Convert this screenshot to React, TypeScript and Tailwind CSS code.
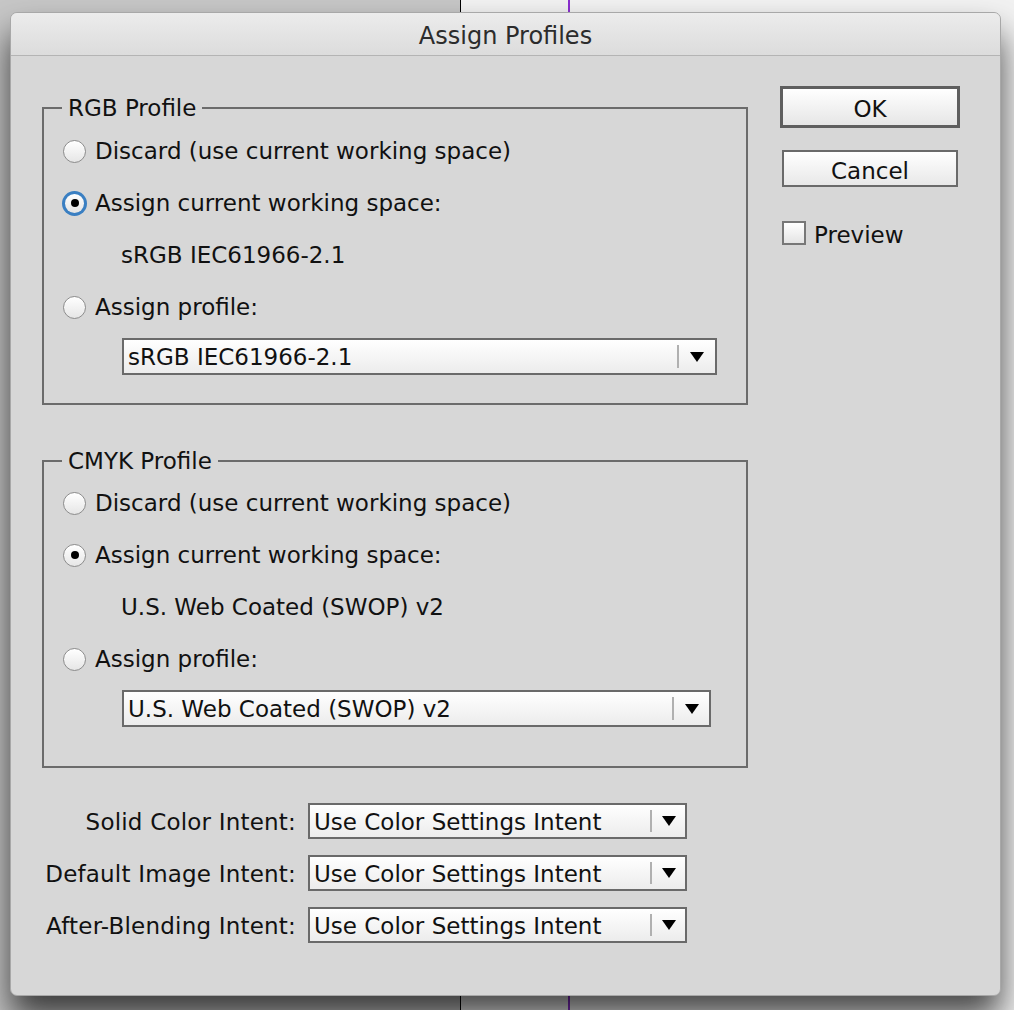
import React from "react";

const font = { fontFamily: '"DejaVu Sans", "Liberation Sans", sans-serif' };

function Radio({ state }: { state: "off" | "focus" | "on" }) {
  if (state === "focus") {
    return (
      <span className="flex h-[25px] w-[25px] items-center justify-center rounded-full bg-[#3a7fc2]">
        <span className="flex h-[19px] w-[19px] items-center justify-center rounded-full bg-gradient-to-b from-white to-[#e4e4e4]">
          <span className="h-[8px] w-[8px] rounded-full bg-black" />
        </span>
      </span>
    );
  }
  return (
    <span className="flex h-[23px] w-[23px] items-center justify-center rounded-full border border-[#8c8c8c] bg-gradient-to-b from-white to-[#e6e6e6] shadow-[inset_0_1px_1px_rgba(255,255,255,0.8)]">
      {state === "on" && <span className="h-[8px] w-[8px] rounded-full bg-black" />}
    </span>
  );
}

function RadioRow({ label, state }: { label: string; state: "off" | "focus" | "on" }) {
  return (
    <div className="flex h-[52px] items-center">
      <div className="ml-[18px] flex w-[25px] items-center justify-center">
        <Radio state={state} />
      </div>
      <span className="ml-[8px] text-[23px] leading-none text-[#111]">{label}</span>
    </div>
  );
}

function Arrow() {
  return (
    <svg width="14" height="10" viewBox="0 0 14 10" className="block">
      <path d="M0 0 H14 L7 10 Z" fill="#000" />
    </svg>
  );
}

function Select({ value, width, arrowW }: { value: string; width: string; arrowW: string }) {
  return (
    <div
      className={`flex h-[37px] ${width} items-center border-2 border-[#6a6a6a] bg-gradient-to-b from-white to-[#ececec]`}
    >
      <span className="flex-1 pl-[4px] pt-[2px] text-[23px] leading-none text-[#111]">{value}</span>
      <span className="h-[23px] w-[2px] bg-[#b0b0b0]" />
      <span className={`flex ${arrowW} items-center justify-center`}>
        <Arrow />
      </span>
    </div>
  );
}

function Group({
  title,
  current,
  currentState,
  selectW,
  arrowW,
  bottomPad,
  rowTop,
}: {
  title: string;
  current: string;
  currentState: "focus" | "on";
  selectW: string;
  arrowW: string;
  bottomPad: string;
  rowTop: string;
}) {
  return (
    <fieldset className={`m-0 w-[706px] border-2 border-[#6b6b6b] p-0 ${bottomPad}`}>
      <legend className="ml-[18px] px-[6px] text-[23px] leading-[28px] text-[#111]">{title}</legend>
      <div className={rowTop}>
        <RadioRow label="Discard (use current working space)" state="off" />
        <RadioRow label="Assign current working space:" state={currentState} />
        <div className="flex h-[52px] items-center">
          <span className="ml-[77px] text-[23px] leading-none text-[#111]">{current}</span>
        </div>
        <RadioRow label="Assign profile:" state="off" />
        <div className="ml-[78px] mt-[5px]">
          <Select value={current} width={selectW} arrowW={arrowW} />
        </div>
      </div>
    </fieldset>
  );
}

function IntentRow({ label }: { label: string }) {
  return (
    <div className="flex h-[52px] items-center">
      <span className="w-[254px] pt-[2px] text-right text-[23px] leading-none tracking-[0.2px] text-[#111]">
        {label}
      </span>
      <div className="ml-[12px]">
        <div className="flex h-[36px] w-[379px] items-center border-2 border-[#6a6a6a] bg-gradient-to-b from-white to-[#ececec]">
          <span className="flex-1 pl-[4px] pt-[2px] text-[23px] leading-none text-[#111]">Use Color Settings Intent</span>
          <span className="h-[22px] w-[2px] bg-[#b0b0b0]" />
          <span className="flex w-[33px] items-center justify-center">
            <Arrow />
          </span>
        </div>
      </div>
    </div>
  );
}

export default function App() {
  return (
    <div className="relative h-[1010px] w-[1014px] overflow-hidden" style={font}>
      <div className="flex h-full w-full">
        <div className="h-full w-[460px] bg-[#c7c7c7]" />
        <div className="h-full w-[1px] bg-black" />
        <div className="h-full w-[107px] bg-[#f2f2f2]" />
        <div className="h-full w-[2px] bg-[#8b2fd0]" />
        <div className="h-full flex-1 bg-[#f2f2f2]" />
      </div>

      <div className="absolute left-[10px] top-[12px] h-[984px] w-[991px] overflow-hidden rounded-[7px] border border-[#a8a8a8] bg-[#d7d7d7] shadow-[0_22px_34px_rgba(0,0,0,0.7)]">
        <div className="flex h-[43px] items-center justify-center border-b border-[#b4b4b4] bg-gradient-to-b from-[#ececec] to-[#dcdcdc] pt-[4px]">
          <span className="text-[24px] leading-none text-[#2c2c2c]">Assign Profiles</span>
        </div>

        <div className="flex pl-[31px]">
          <div className="flex flex-col pt-[38px]">
            <Group
              title="RGB Profile"
              current="sRGB IEC61966-2.1"
              currentState="focus"
              selectW="w-[595px]"
              arrowW="w-[36px]"
              bottomPad="pb-[28px]"
              rowTop="pt-[3px]"
            />
            <div className="mt-[42px]">
              <Group
                title="CMYK Profile"
                current="U.S. Web Coated (SWOP) v2"
                currentState="on"
                selectW="w-[589px]"
                arrowW="w-[35px]"
                bottomPad="pb-[39px]"
                rowTop="pt-[2px]"
              />
            </div>
            <div className="mt-[27px] flex flex-col">
              <IntentRow label="Solid Color Intent:" />
              <IntentRow label="Default Image Intent:" />
              <IntentRow label="After-Blending Intent:" />
            </div>
          </div>

          <div className="ml-[32px] flex flex-col pt-[30px]">
            <button className="flex h-[42px] w-[180px] items-center justify-center border-[3px] border-[#5f5f5f] bg-gradient-to-b from-white to-[#e6e6e6] pt-[5px] text-[23px] leading-none text-[#111]">
              OK
            </button>
            <button className="ml-[2px] mt-[22px] flex h-[37px] w-[176px] items-center justify-center border-2 border-[#6a6a6a] bg-gradient-to-b from-white to-[#e8e8e8] pt-[6px] text-[23px] leading-none text-[#111]">
              Cancel
            </button>
            <div className="ml-[2px] mt-[32px] flex items-center">
              <span className="h-[24px] w-[24px] border-2 border-[#777] bg-gradient-to-b from-white to-[#e4e4e4]" />
              <span className="ml-[8px] pt-[5px] text-[23px] leading-none text-[#111]">Preview</span>
            </div>
          </div>
        </div>
      </div>
    </div>
  );
}
